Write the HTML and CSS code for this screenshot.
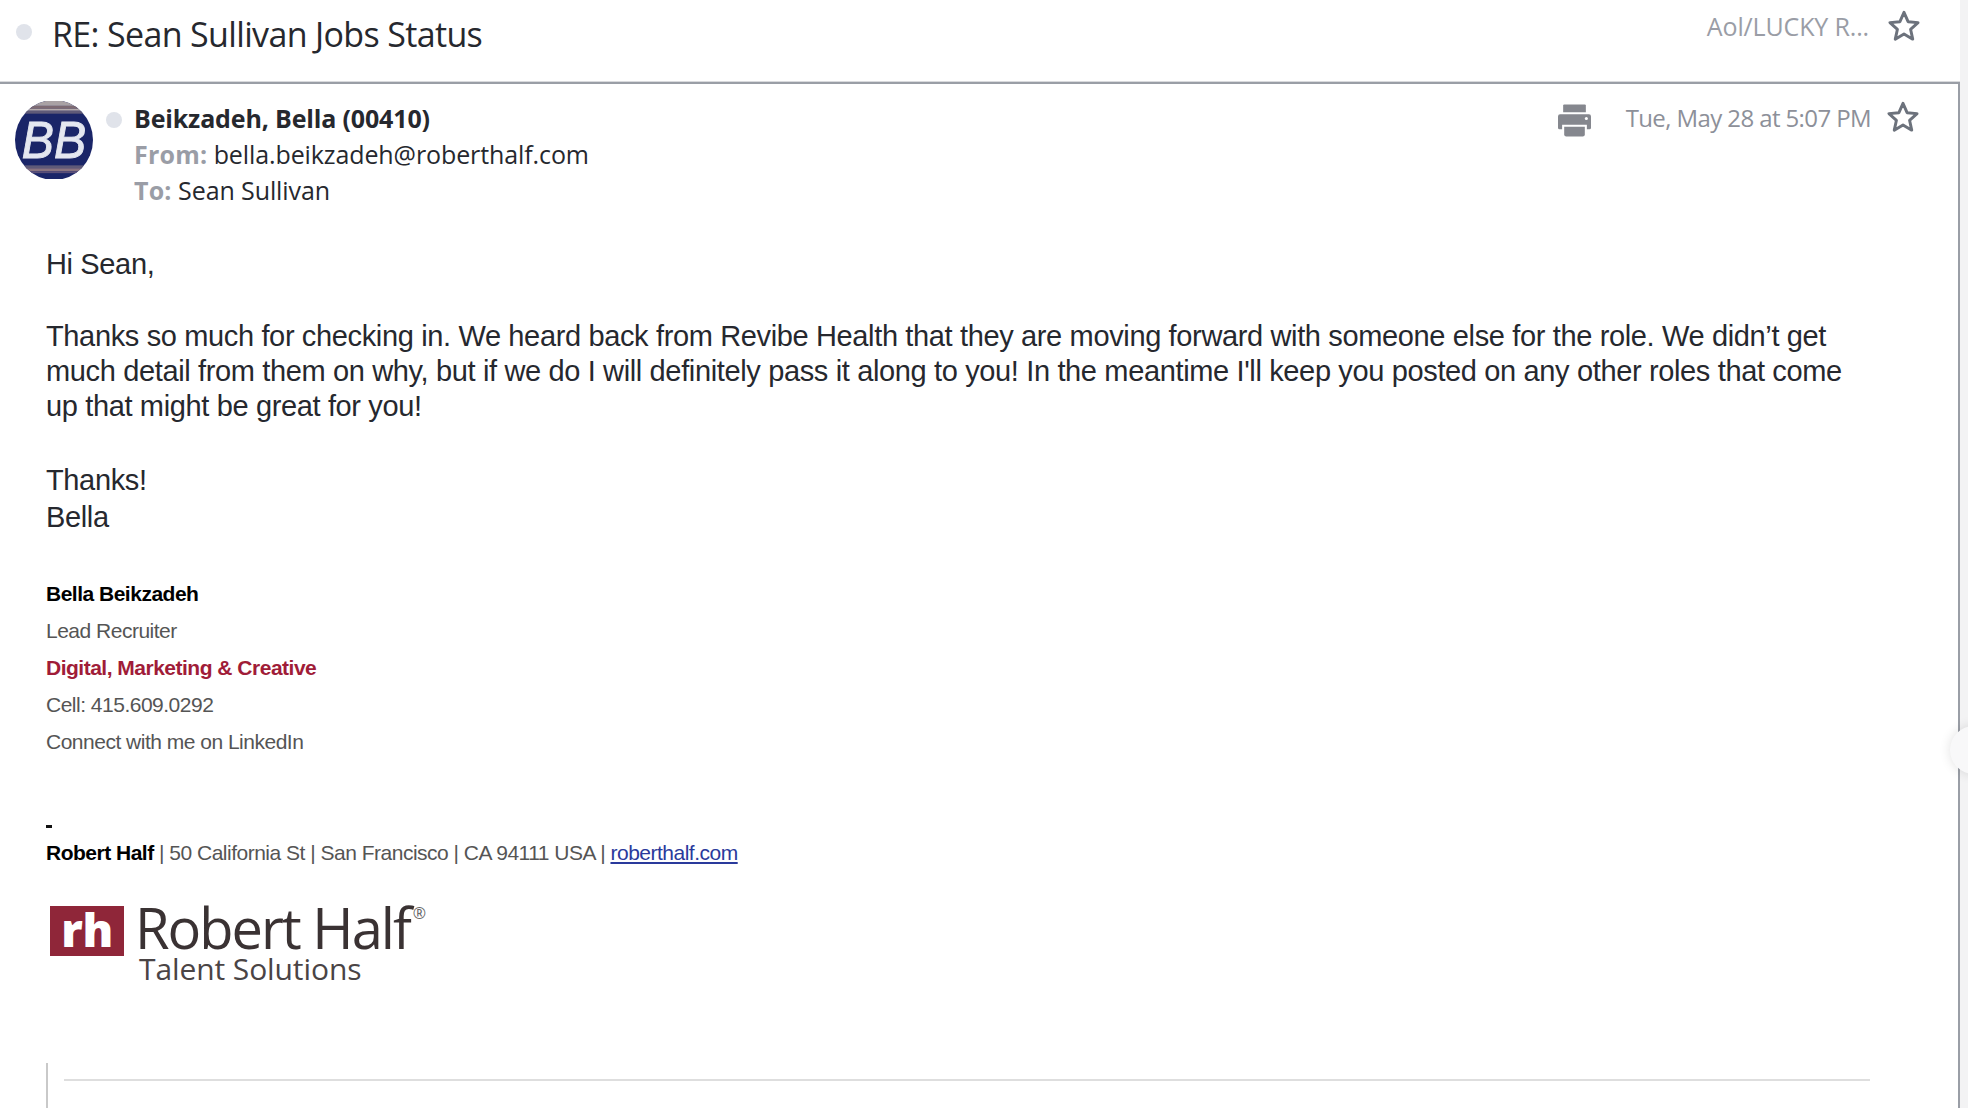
FILE: index.html
```html
<!DOCTYPE html>
<html>
<head>
    <title>RE: Sean Sullivan Jobs Status</title>
    <link rel="stylesheet" href="styles.css">
</head>
<body>
    <div class="page">
        <div class="subject-bar">
            <span class="dot subject-dot"></span>
            <h1 class="subject">RE: Sean Sullivan Jobs Status</h1>
            <span class="folder">Aol/LUCKY R...</span>
            <svg class="star star-top" viewBox="0 0 30 30"><polygon points="15,3 18.6,11.2 27.4,12 20.8,17.9 22.7,26.6 15,22 7.3,26.6 9.2,17.9 2.6,12 11.4,11.2"/></svg>
        </div>

        <div class="message">
            <div class="msg-head">
                <div class="avatar">
                    <svg viewBox="0 0 80 80">
                        <rect width="80" height="80" fill="#1a2568"/>
                        <rect y="0" width="80" height="5" fill="#a9a2a4"/>
                        <rect y="5" width="80" height="3" fill="#7d6a72"/>
                        <rect y="8" width="80" height="2" fill="#b5abab"/>
                        <rect y="10" width="80" height="3" fill="#5f5a78"/>
                        <rect y="66" width="80" height="3" fill="#5f5a78"/>
                        <rect y="69" width="80" height="3" fill="#8a7480"/>
                        <rect y="72" width="80" height="2" fill="#5a4f78"/>
                        <text x="7" y="58" textLength="66" lengthAdjust="spacingAndGlyphs" class="avatar-text">BB</text>
                    </svg>
                </div>
                <span class="dot sender-dot"></span>
                <div class="sender">
                    <div class="sender-name">Beikzadeh, Bella (00410)</div>
                    <div class="sender-line"><b>From:</b> bella.beikzadeh@roberthalf.com</div>
                    <div class="sender-line"><b>To:</b> Sean Sullivan</div>
                </div>
                <svg class="printer" viewBox="0 0 32 32">
                    <path d="M5 1.500a1 1 0 0 1 1-1h20a1 1 0 0 1 1 1V8H5z"/>
                    <path d="M2 10h28a2 2 0 0 1 2 2v11a1.500 1.500 0 0 1-1.500 1.500H28V20H4v4.500H1.500A1.500 1.500 0 0 1 0 23V12a2 2 0 0 1 2-2z"/>
                    <path d="M6 22h20v7.500a2 2 0 0 1-2 2H8a2 2 0 0 1-2-2z"/>
                    <circle cx="27.500" cy="14" r="1.500" fill="#fff"/>
                </svg>
                <span class="msg-date">Tue, May 28 at 5:07 PM</span>
                <svg class="star star-msg" viewBox="0 0 30 30"><polygon points="15,3 18.6,11.2 27.4,12 20.8,17.9 22.7,26.6 15,22 7.3,26.6 9.2,17.9 2.6,12 11.4,11.2"/></svg>
            </div>

            <div class="msg-body">
                <p class="greeting">Hi Sean,</p>
                <p class="para">Thanks so much for checking in. We heard back from Revibe Health that they are moving forward with someone else for the role. We didn’t get much detail from them on why, but if we do I will definitely pass it along to you! In the meantime I'll keep you posted on any other roles that come up that might be great for you!</p>
                <p class="closing">Thanks!<br>Bella</p>

                <div class="signature">
                    <div class="sig-name">Bella Beikzadeh</div>
                    <div>Lead Recruiter</div>
                    <div class="sig-team">Digital, Marketing &amp; Creative</div>
                    <div>Cell: 415.609.0292</div>
                    <div>Connect with me on LinkedIn</div>
                </div>

                <div class="sig-dash"></div>
                <div class="sig-address"><b>Robert Half</b> | 50 California St | San Francisco | CA 94111 USA | <a href="#">roberthalf.com</a></div>

                <div class="logo">
                    <div class="logo-mark">rh</div>
                    <div class="logo-words">
                        <div class="logo-name">Robert Half<sup>®</sup></div>
                        <div class="logo-sub">Talent Solutions</div>
                    </div>
                </div>

                <div class="quoted">
                    <hr class="quoted-rule">
                </div>
            </div>
        </div>
        <div class="side-handle"></div>
    </div>
</body>
</html>
```

FILE: styles.css
```css
html, body { margin: 0; padding: 0; height: 100%; overflow: hidden; }
body { background: #f3f3f4; font-family: "Open Sans", sans-serif; }
.page { width: 1960px; height: 1108px; position: relative; }

/* subject row */
.subject-bar { height: 81px; background: white; display: flex; align-items: flex-start; border-bottom: 1px solid #d9dadd; }
.dot { display: block; width: 16px; height: 16px; border-radius: 50%; background: #e0e3ea; flex: none; }
.subject-dot { margin: 24px 0 0 16px; }
.subject { margin: 12px 0 0 20px; font-size: 34px; line-height: 44px; font-weight: 400; color: #26282e; letter-spacing: -0.65px; flex: 1; }
.folder { margin-top: 9px; font-size: 25px; line-height: 34px; color: #9a9da6; letter-spacing: -0.15px; }
.star { fill: none; stroke: #6c727c; stroke-width: 2.6; stroke-linejoin: round; flex: none; }
.star-top { width: 34px; height: 34px; margin: 9px 39px 0 18px; }

/* message */
.message { background: white; border-top: 2px solid #9a9ea6; border-right: 2px solid #9a9ea6; height: 1024px; overflow: hidden; }
.msg-head { display: flex; align-items: flex-start; height: 159px; }
.avatar { width: 78px; height: 80px; margin: 16px 0 0 15px; border-radius: 50%; overflow: hidden; flex: none; }
.avatar svg { display: block; width: 100%; height: 100%; }
.avatar-text { font-family: "Liberation Sans", sans-serif; font-size: 54px; font-style: italic; fill: #e4e7f0; stroke: #e4e7f0; stroke-width: 1; }
.sender-dot { margin: 28px 0 0 13px; }
.sender { margin: 16px 0 0 12px; flex: 1; }
.sender-name { font-size: 25px; line-height: 36px; font-weight: 700; color: #26282e; letter-spacing: -0.15px; }
.sender-line { font-size: 25px; line-height: 36px; color: #26282e; letter-spacing: -0.1px; }
.sender-line b { color: #9a9da6; letter-spacing: 0.2px; }
.printer { width: 33px; height: 33px; margin: 20px 0 0 0; fill: #85878e; flex: none; }
.msg-date { margin: 17px 0 0 35px; font-size: 24px; line-height: 34px; color: #8d9099; letter-spacing: -0.6px; }
.star-msg { width: 34px; height: 34px; margin: 16px 38px 0 15px; }

/* body */
.msg-body { padding: 0 88px 0 46px; font-family: "Liberation Sans", sans-serif; color: #26282e; }
.greeting, .para, .closing { margin: 0; font-size: 29px; letter-spacing: -0.36px; }
.greeting { line-height: 36px; margin-top: 3px; }
.para { line-height: 35px; margin-top: 37px; }
.closing { line-height: 37px; margin-top: 38px; }
.signature { margin-top: 39px; font-size: 21px; line-height: 37px; color: #555; letter-spacing: -0.5px; }
.sig-name { color: black; font-weight: 700; }
.sig-team { color: #a01c38; font-weight: 700; }
.sig-dash { width: 6px; height: 3px; background: #111; margin-top: 65px; }
.sig-address { font-size: 21px; line-height: 30px; margin-top: 10px; color: #555; letter-spacing: -0.5px; }
.sig-address b { color: black; }
.sig-address a { color: #2a3a9c; }

.logo { display: flex; align-items: flex-start; margin: 38px 0 0 4px; }
.logo-mark { width: 74px; height: 50px; background: #8f2639; color: white; font-family: "Open Sans", sans-serif; font-weight: 800; font-size: 46px; line-height: 46px; text-align: center; letter-spacing: -0.5px; }
.logo-words { margin-left: 11px; margin-top: -6px; font-family: "Open Sans", sans-serif; color: #3a3233; }
.logo-name { font-size: 56px; line-height: 54px; letter-spacing: -2px; }
.logo-name sup { font-size: 16px; line-height: 0; vertical-align: 30px; margin-left: 3px; color: #666; }
.logo-sub { font-size: 30px; line-height: 30px; margin-left: 4px; color: #4a4445; letter-spacing: -0.1px; }

.quoted { border-left: 2px solid #c9c9c9; height: 80px; margin-top: 79px; padding: 16px 0 0 16px; box-sizing: border-box; }
.quoted-rule { border: 0; border-top: 2px solid #dedede; margin: 0; }

/* half hidden round button on the edge */
.side-handle { position: absolute; left: 1950px; top: 726px; width: 48px; height: 48px; border-radius: 50%; background: #f8f8f9; box-shadow: 0 0 12px rgba(0,0,0,0.12); }
```
